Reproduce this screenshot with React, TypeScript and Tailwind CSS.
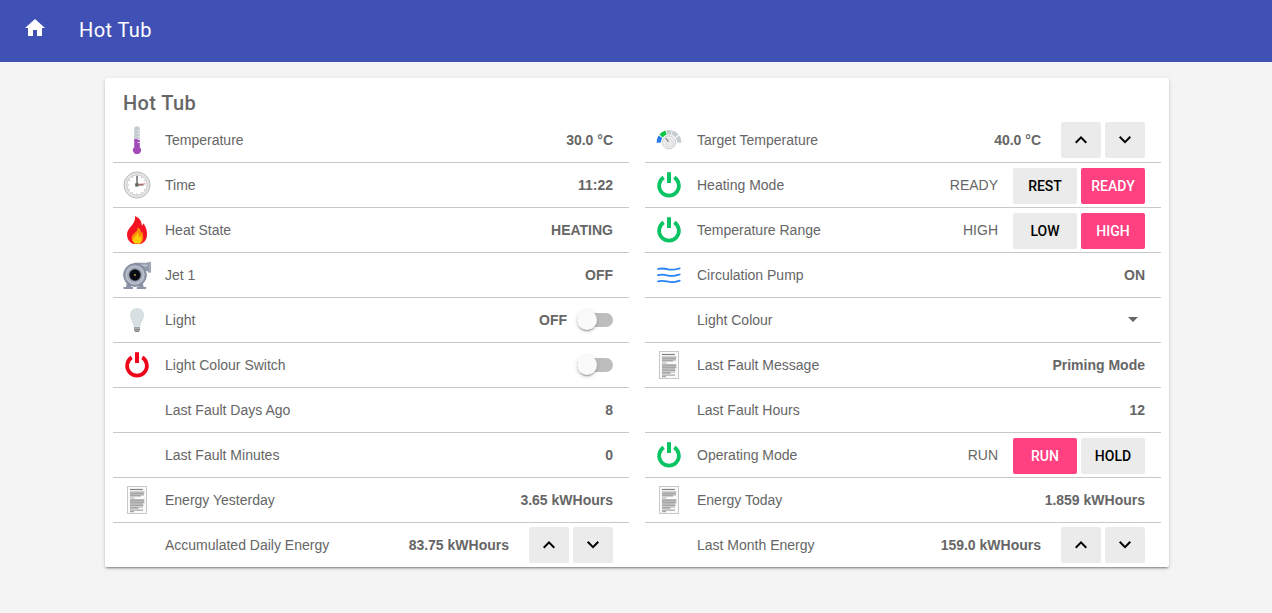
import React from "react";

type IconName = "thermo" | "clock" | "fire" | "pump" | "bulb" | "powerRed" | "powerGreen" | "dial" | "flow" | "text";

function Power({ color }: { color: string }) {
  return (
    <svg width="28" height="28" viewBox="0 0 28 28" fill="none" stroke={color}>
      <path d="M8.7 6.4 A9.9 9.9 0 1 0 19.3 6.4" strokeWidth="3.7" />
      <path d="M14 1.2 V12" strokeWidth="4" />
    </svg>
  );
}

function Icon({ name }: { name: IconName }) {
  switch (name) {
    case "powerRed":
      return <Power color="#f0041a" />;
    case "powerGreen":
      return <Power color="#0ac464" />;
    case "thermo":
      return (
        <svg width="28" height="28" viewBox="0 0 28 28">
          <path d="M11.2 3 a2.8 2.8 0 0 1 5.6 0 V14 H11.2 Z" fill="#c5cdd0" />
          <path d="M11.2 13 H16.8 V21.2 A4 4 0 1 1 11.2 21.2 Z" fill="#a24cb8" />
          <path d="M14.5 4.5 H17 M14.5 7.5 H17 M14.5 10.5 H17 M14.5 13.5 H17 M14.5 16.5 H17" stroke="#eef0f2" strokeWidth="0.8" />
        </svg>
      );
    case "clock":
      return (
        <svg width="28" height="28" viewBox="0 0 28 28">
          <circle cx="14" cy="14" r="13" fill="#e6e6e6" stroke="#b4b4b4" strokeWidth="0.9" />
          <circle cx="14" cy="14" r="10.2" fill="#fff" stroke="#c2c2c2" strokeWidth="0.8" />
          <circle cx="14" cy="14" r="8.8" fill="none" stroke="#999" strokeWidth="1.2" strokeDasharray="0.7 3.908" strokeDashoffset="0.35" />
          <path d="M14 14.6 V4.8" stroke="#606060" strokeWidth="1.4" />
          <path d="M12.5 13.8 H20.5" stroke="#666" strokeWidth="1.5" />
          <path d="M12 13.6 L22.5 12.8" stroke="#e07870" strokeWidth="0.9" />
          <rect x="12.3" y="12.2" width="3.2" height="3.4" fill="#666" />
        </svg>
      );
    case "fire":
      return (
        <svg width="28" height="28" viewBox="0 0 28 28">
          <path d="M12 0 C17 2.2 18.6 5.5 18.9 9.7 C19.7 9 20.1 8.4 20.4 7.3 C22.8 10.6 24 14.3 24 18 C24 23.5 21.6 26.6 17.5 28 H10.3 C6.4 26.4 4 23 4 18.6 C4 11.2 13.2 8.6 12 0 Z" fill="#f31322" />
          <path d="M14.7 11.2 C17.4 12.6 18 14.6 18 17 L19.2 15.8 C21 21.5 20.4 25.3 17.3 27.5 H11.2 C8 24.5 8 21.2 10 18.6 C12 16 14.7 15.2 14.7 11.2 Z" fill="#fb8c08" />
          <path d="M14.2 16.2 C15.7 17.3 15.6 19.5 15.9 21.3 L17.7 19.7 C19.2 23.5 18.6 26 16.8 27.4 H12 C10 25.5 9.6 23.4 11.2 21.4 C12.6 19.7 14.3 18.9 14.2 16.2 Z" fill="#fecd08" />
        </svg>
      );
    case "pump":
      return (
        <svg width="28" height="28" viewBox="0 0 28 28">
          <path d="M12 2.2 H25 V9.5 H18 Z" fill="#979eb0" stroke="#7c8396" strokeWidth="0.7" />
          <path d="M13 4.5 H25" stroke="#bac0ce" strokeWidth="1.7" />
          <path d="M25.2 1.3 H27.8 V11.2 H25.2 Z" fill="#a4abbb" stroke="#7c8396" strokeWidth="0.6" />
          <path d="M3.8 22 H8.4 L8 26 H10 V28 H0.5 V26 H3 Z M15.2 22 H19.8 L20.7 26 H23.2 V28 H13.8 V26 H15.5 Z" fill="#8d94a7" />
          <circle cx="12" cy="14" r="11.4" fill="#9299ac" stroke="#747b8e" strokeWidth="0.8" />
          <circle cx="12" cy="14" r="8.8" fill="#a7adbc" stroke="#bcc1ce" strokeWidth="1.5" />
          <circle cx="12" cy="14" r="6.2" fill="#626878" />
          <circle cx="12" cy="14" r="5.4" fill="#080b10" />
          <circle cx="12" cy="14" r="1" fill="#b49b42" />
        </svg>
      );
    case "bulb":
      return (
        <svg width="28" height="28" viewBox="0 0 28 28">
          <path d="M14 2 C18.3 2 21 5 21 9 C21 13.6 18 16 17.3 20.7 H10.7 C10 16 7 13.6 7 9 C7 5 9.7 2 14 2 Z" fill="#d7dfe2" />
          <path d="M11 21.2 H17 V24.2 L15.7 26 H12.3 L11 24.2 Z" fill="#7b8083" />
          <path d="M11 22.6 H17 M11 24.3 H17" stroke="#d5d8da" strokeWidth="0.6" />
        </svg>
      );
    case "dial":
      return (
        <svg width="28" height="28" viewBox="0 0 28 28" fill="none">
          <g strokeWidth="4.4">
            <path d="M3.8 16.6 A10.3 10.3 0 0 1 5.5 10.8" stroke="#2878e8" />
            <path d="M6.1 10 A10.3 10.3 0 0 1 11 6.7" stroke="#12c542" />
            <path d="M11.6 6.5 A10.3 10.3 0 0 1 16.4 6.5" stroke="#c8cdd0" />
            <path d="M17 6.7 A10.3 10.3 0 0 1 21.9 10" stroke="#c8cdd0" />
            <path d="M22.5 10.8 A10.3 10.3 0 0 1 24.2 16.6" stroke="#c8cdd0" />
          </g>
          <circle cx="14" cy="16.3" r="7.6" fill="#fff" />
          <circle cx="14" cy="16.3" r="6.5" fill="#ededed" stroke="#b4b4b4" strokeWidth="0.9" strokeDasharray="1.6 0.5" />
          <circle cx="14.5" cy="17" r="3.8" fill="#e9e9e9" stroke="#d2d2d2" strokeWidth="0.5" />
          <path d="M10.6 12 L13.4 15.6" stroke="#777" strokeWidth="1.1" />
        </svg>
      );
    case "flow":
      return (
        <svg width="28" height="28" viewBox="0 0 28 28" fill="none" stroke="#2583f6" strokeWidth="1.8" strokeLinecap="round">
          <path d="M3 8 C10 6.2 12 9 17 8.7 C21 8.6 22 8 24.7 7.3" />
          <path d="M3 14.2 C10 12.4 12 15.2 17 14.9 C21 14.8 22 14.2 24.7 13.5" />
          <path d="M3 20.4 C10 18.6 12 21.4 17 21.1 C21 21 22 20.4 24.7 19.7" />
        </svg>
      );
    case "text":
      return (
        <svg width="28" height="28" viewBox="0 0 28 28" fill="none">
          <rect x="4.5" y="0.5" width="19" height="27" fill="#fafafa" stroke="#c8c8c8" />
          <path d="M7 3.5 H19.8" stroke="#808080" strokeWidth="1.2" />
          <path d="M7 6 H21.5 M7 7.4 H21 M7 8.8 H21 M7 10 H18 M7 12 H11.5 M7 13.8 H21.5 M7 15.2 H21 M7 16.6 H21.5 M7 18 H20 M7 19.4 H20.5 M7 21 H20 M7 22.2 H15.5 M7 24.2 H20 M7 25.7 H11" stroke="#a6a6a6" strokeWidth="1.2" />
        </svg>
      );
  }
}

interface Item {
  icon?: IconName;
  label: string;
  value?: string;
  steps?: boolean;
  toggle?: boolean;
  select?: boolean;
  options?: string[];
}

const left: Item[] = [
  { icon: "thermo", label: "Temperature", value: "30.0 °C" },
  { icon: "clock", label: "Time", value: "11:22" },
  { icon: "fire", label: "Heat State", value: "HEATING" },
  { icon: "pump", label: "Jet 1", value: "OFF" },
  { icon: "bulb", label: "Light", value: "OFF", toggle: true },
  { icon: "powerRed", label: "Light Colour Switch", toggle: true },
  { label: "Last Fault Days Ago", value: "8" },
  { label: "Last Fault Minutes", value: "0" },
  { icon: "text", label: "Energy Yesterday", value: "3.65 kWHours" },
  { label: "Accumulated Daily Energy", value: "83.75 kWHours", steps: true },
];

const right: Item[] = [
  { icon: "dial", label: "Target Temperature", value: "40.0 °C", steps: true },
  { icon: "powerGreen", label: "Heating Mode", value: "READY", options: ["REST", "READY"] },
  { icon: "powerGreen", label: "Temperature Range", value: "HIGH", options: ["LOW", "HIGH"] },
  { icon: "flow", label: "Circulation Pump", value: "ON" },
  { label: "Light Colour", select: true },
  { icon: "text", label: "Last Fault Message", value: "Priming Mode" },
  { label: "Last Fault Hours", value: "12" },
  { icon: "powerGreen", label: "Operating Mode", value: "RUN", options: ["RUN", "HOLD"] },
  { icon: "text", label: "Energy Today", value: "1.859 kWHours" },
  { label: "Last Month Energy", value: "159.0 kWHours", steps: true },
];

function StepButton({ d }: { d: string }) {
  return (
    <button className="flex h-9 w-10 items-center justify-center rounded-[2px] bg-[#ebebeb] text-black">
      <svg width="24" height="24" viewBox="0 0 24 24" fill="currentColor">
        <path d={d} />
      </svg>
    </button>
  );
}

function Controls({ item }: { item: Item }) {
  if (item.steps) {
    return (
      <div className="ml-5 flex gap-1">
        <StepButton d="M12 8l-6 6 1.41 1.41L12 10.83l4.59 4.58L18 14z" />
        <StepButton d="M16.59 8.09L12 12.67 7.41 8.09 6 9.5l6 6 6-6z" />
      </div>
    );
  }
  if (item.toggle) {
    return (
      <div className="ml-2.5 flex h-3.5 w-9 items-center rounded-full bg-[#bdbdbd]">
        <span className="size-5 shrink-0 rounded-full bg-[#fafafa] shadow-[0_2px_2px_0_rgba(0,0,0,0.14),0_3px_1px_-2px_rgba(0,0,0,0.2),0_1px_5px_0_rgba(0,0,0,0.12)]" />
      </div>
    );
  }
  if (item.options) {
    return (
      <div className="ml-[15px] flex gap-1 pt-0.5">
        {item.options.map((o) => (
          <button
            key={o}
            className={
              "h-9 w-16 rounded-[2px] font-['Roboto',sans-serif] text-sm font-medium " +
              (o === item.value ? "bg-[#ff4081] text-white" : "bg-[#ebebeb] text-black")
            }
          >
            {o}
          </button>
        ))}
      </div>
    );
  }
  if (item.select) {
    return (
      <svg className="mr-[7px] mb-0.5" width="10" height="5" viewBox="0 0 10 5" fill="#666">
        <path d="M0 0h10L5 5z" />
      </svg>
    );
  }
  return null;
}

function Column({ items }: { items: Item[] }) {
  return (
    <div className="w-[516px]">
      {items.map((item) => (
        <div
          key={item.label}
          className="flex h-[45px] items-center border-b border-[#c8c8c8] pr-4 pl-2.5 last:h-11 last:border-b-0"
        >
          <div className="mr-3.5 size-7 shrink-0">{item.icon && <Icon name={item.icon} />}</div>
          <span className="grow">{item.label}</span>
          {item.value && <span className={item.options ? "" : "font-bold"}>{item.value}</span>}
          <Controls item={item} />
        </div>
      ))}
    </div>
  );
}

export default function App() {
  return (
    <div className="min-h-screen bg-[#f4f4f4] font-['Liberation_Sans',Arial,sans-serif] text-sm leading-5 text-[#666] [text-rendering:optimizeSpeed]">
      <header className="flex h-[62px] items-center bg-[#3f51b5] pl-[23px] text-white">
        <svg className="mb-1.5" width="24" height="24" viewBox="0 0 24 24" fill="currentColor">
          <path d="M10 20v-6h4v6h5v-8h3L12 3 2 12h3v8z" />
        </svg>
        <h1 className="mb-0.5 ml-8 font-['Roboto',sans-serif] text-xl font-normal tracking-[0.02em]">Hot Tub</h1>
      </header>
      <main className="mt-4 ml-[105px] h-[489px] w-[1064px] rounded-[2px] bg-white px-2 shadow-[0_2px_2px_0_rgba(0,0,0,0.14),0_3px_1px_-2px_rgba(0,0,0,0.2),0_1px_5px_0_rgba(0,0,0,0.12)]">
        <h2 className="h-10 pt-2.5 pl-2.5 font-['Roboto',sans-serif] text-xl leading-[30px] font-medium tracking-[0.02em]">
          Hot Tub
        </h2>
        <div className="flex gap-4">
          <Column items={left} />
          <Column items={right} />
        </div>
      </main>
    </div>
  );
}
